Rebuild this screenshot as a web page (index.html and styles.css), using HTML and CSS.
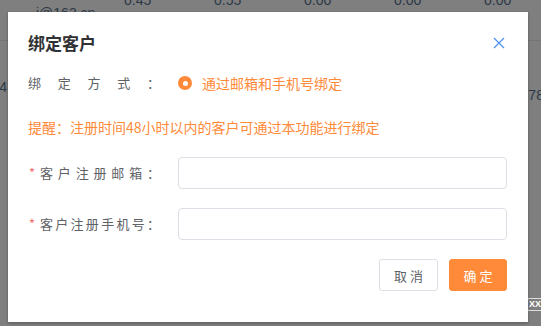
FILE: index.html
```html
<!DOCTYPE html>
<html lang="zh-CN">
<head>
<meta charset="utf-8">
<title>绑定客户</title>
<link rel="stylesheet" href="styles.css">
</head>
<body>
<div class="page">
  <div class="table">
    <div class="trow first">
      <span class="c0">i@163.cn</span><span class="c1">0.45</span><span class="c2">0.55</span><span class="c3">0.00</span><span class="c4">0.00</span><span class="c5">0.00</span>
    </div>
    <div class="trow second">
      <span class="c0">1234</span><span class="cend">45678</span>
    </div>
  </div>
  <div class="badge">XX</div>
  <div class="notch"></div>
</div>

<div class="dialog">
  <div class="header">
    <h2 class="title">绑定客户</h2>
    <button class="close" aria-label="关闭">
      <svg width="12" height="12" viewBox="0 0 12 12"><path d="M1 1L11 11M11 1L1 11" stroke="#4a90f0" stroke-width="1.2" fill="none"/></svg>
    </button>
  </div>

  <div class="form-row mode">
    <span class="label plain">绑定方式：</span>
    <span class="radio"><span class="dot"></span></span>
    <span class="radio-text">通过邮箱和手机号绑定</span>
  </div>

  <p class="notice">提醒：注册时间48小时以内的客户可通过本功能进行绑定</p>

  <div class="form-row field first-field">
    <span class="req">*</span><span class="label">客户注册邮箱：</span>
    <input class="input" type="text">
  </div>
  <div class="form-row field">
    <span class="req">*</span><span class="label">客户注册手机号：</span>
    <input class="input" type="text">
  </div>

  <div class="footer">
    <button class="btn cancel">取消</button>
    <button class="btn ok">确定</button>
  </div>
</div>
</body>
</html>
```

FILE: styles.css
```css
* { box-sizing: border-box; }
html, body {
  margin: 0;
  padding: 0;
  width: 541px;
  height: 326px;
  overflow: hidden;
  background: #7f7f7f;
  font-family: "Noto Sans CJK SC", "Noto Sans", sans-serif;
}
.page {
  position: relative;
  width: 541px;
  height: 326px;
}
.table {
  color: #2c3848;
  font-family: "Liberation Sans", Arial, sans-serif;
  font-size: 14px;
}
.trow {
  position: relative;
  border-bottom: 1px solid #747474;
}
.trow.first {
  height: 49px;
  margin-top: -8px;
}
.trow span { position: absolute; top: 0; line-height: 16px; }
.trow.first .c0 { left: 36px; top: 13px; }
.c1 { left: 124px; }
.c2 { left: 214px; }
.c3 { left: 304px; }
.c4 { left: 394px; }
.c5 { left: 484px; }
.trow.second { height: 60px; border: none; }
.trow.second .c0 { left: -24px; top: 38px; }
.trow.second .cend { left: 505px; top: 46px; }
.badge {
  position: absolute;
  left: 527px;
  top: 306px;
  width: 16px;
  height: 13px;
  border: 1px solid #ddd;
  border-radius: 2px;
  color: #fff;
  font: bold 9px/11px "Liberation Sans", sans-serif;
  padding-left: 1px;
}
.notch {
  position: absolute;
  left: 418px;
  top: 322px;
  width: 12px;
  height: 4px;
  background: #fff;
  clip-path: polygon(0 0, 100% 0, 60% 100%, 40% 100%);
}

.dialog {
  position: absolute;
  left: 8px;
  top: 12px;
  width: 520px;
  height: 310px;
  background: #fff;
  box-shadow: 0 1px 3px rgba(0,0,0,0.3);
  padding: 0 21px 0 20px;
}
.header {
  display: flex;
  justify-content: space-between;
  align-items: center;
  padding-top: 19px;
  height: 43px;
}
.title {
  margin: 0;
  font-size: 17px;
  line-height: 24px;
  font-weight: bold;
  color: #303133;
}
.close {
  border: none;
  background: none;
  padding: 0;
  margin-right: 2px;
  width: 12px;
  height: 12px;
  display: flex;
}
.form-row {
  display: flex;
  align-items: center;
}
.mode {
  margin-top: 16px;
  height: 24px;
}
.label {
  display: inline-block;
  font-size: 13px;
  line-height: 24px;
  color: #606266;
  text-align: justify;
  text-align-last: justify;
  text-justify: inter-character;
}
.label.plain { width: 132px; }
.radio {
  width: 14px;
  height: 14px;
  border-radius: 50%;
  background: #ff8a3a;
  margin-left: 18px;
  display: flex;
  align-items: center;
  justify-content: center;
}
.dot {
  width: 5px;
  height: 5px;
  border-radius: 50%;
  background: #fff;
}
.radio-text {
  margin-left: 10px;
  font-size: 14px;
  line-height: 24px;
  color: #ff8a3a;
}
.notice {
  margin: 20px 0 0;
  font-size: 14px;
  line-height: 24px;
  color: #ff8a3a;
}
.field {
  margin-top: 19px;
  height: 32px;
}
.field.first-field { margin-top: 18px; }
.req {
  width: 12px;
  color: #f56c6c;
  font-size: 13px;
  line-height: 24px;
  padding-left: 1px;
}
.field .label { width: 120px; }
.input {
  margin-left: 18px;
  flex: 1;
  height: 32px;
  border: 1px solid #dcdfe6;
  border-radius: 4px;
  background: #fff;
  outline: none;
}
.footer {
  margin-top: 19px;
  display: flex;
  justify-content: flex-end;
  gap: 11px;
}
.btn {
  height: 32px;
  width: 59px;
  border-radius: 3px;
  font-family: "Noto Sans CJK SC", sans-serif;
  font-size: 13px;
  letter-spacing: 3px;
  padding: 0 0 0 3px;
}
.cancel {
  background: #fff;
  border: 1px solid #dcdfe6;
  color: #606266;
}
.ok {
  width: 58px;
  background: #ff8a3a;
  border: 1px solid #ff8a3a;
  color: #fff;
}
```
